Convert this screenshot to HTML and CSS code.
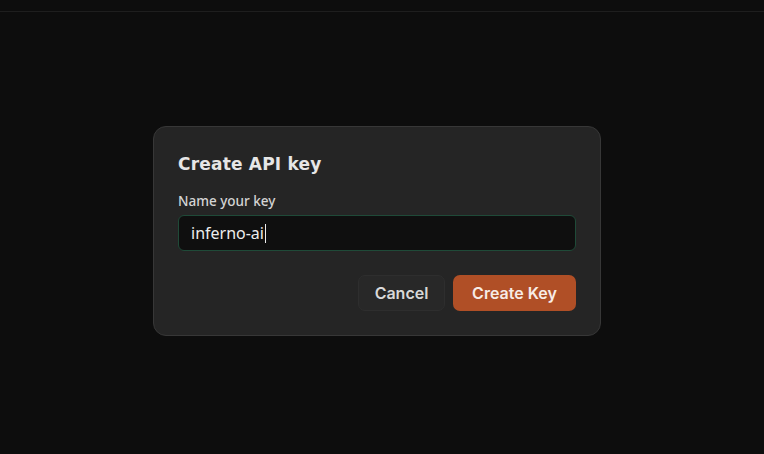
FILE: index.html
```html
<!DOCTYPE html>
<html>
<head>
<meta charset="utf-8">
<link rel="stylesheet" href="styles.css">
</head>
<body>
<div class="topbar"></div>
<main class="stage">
  <section class="dialog">
    <h2 class="title">Create API key</h2>
    <label class="label" for="k">Name your key</label>
    <div class="input"><span class="value">inferno-ai</span><span class="caret"></span></div>
    <div class="actions">
      <button class="btn btn-cancel">Cancel</button>
      <button class="btn btn-primary">Create Key</button>
    </div>
  </section>
</main>
</body>
</html>
```
FILE: styles.css
```css
html, body { margin: 0; padding: 0; }
body {
  background: #0d0d0d;
  width: 764px;
  height: 454px;
  overflow: hidden;
  font-family: "Inter", "Noto Sans", sans-serif;
}
.topbar {
  height: 11px;
  border-bottom: 1px solid #1e1e1e;
}
.stage {
  display: flex;
  justify-content: flex-start;
  padding-top: 114px;
  padding-left: 153px;
}
.dialog {
  box-sizing: border-box;
  width: 448px;
  height: 210px;
  background: #252525;
  border: 1px solid #373737;
  border-radius: 13px;
  padding: 25px 24px 0 24px;
  display: flex;
  flex-direction: column;
}
.title {
  margin: 0;
  font-family: "DejaVu Sans", sans-serif;
  font-weight: 700;
  font-size: 17px;
  letter-spacing: 0.2px;
  color: #e6e6e6;
  line-height: 24px;
}
.label {
  margin-top: 17px;
  font-family: "Noto Sans", sans-serif;
  font-size: 13.5px;
  font-weight: 500;
  color: #d4d4d4;
  line-height: 16px;
}
.input {
  box-sizing: border-box;
  margin-top: 6px;
  height: 36px;
  background: #0f0f0f;
  border: 1px solid #1f4a38;
  border-radius: 6px;
  display: flex;
  align-items: center;
  padding-left: 12px;
}
.value {
  font-family: "Noto Sans", sans-serif;
  font-size: 16px;
  color: #ededed;
}
.caret {
  width: 1px;
  height: 19px;
  background: #ededed;
  margin-left: 1px;
}
.actions {
  margin-top: 24px;
  display: flex;
  justify-content: flex-end;
  gap: 8px;
}
.btn {
  height: 36px;
  border-radius: 7px;
  font-family: "Inter", sans-serif;
  font-weight: 600;
  font-size: 16px;
  cursor: pointer;
}
.btn-cancel {
  width: 87px;
  background: #282828;
  border: 1px solid #2e2e2e;
  color: #d8d8d8;
}
.btn-primary {
  width: 123px;
  background: #b04f26;
  border: none;
  color: #f7ece6;
}
```
